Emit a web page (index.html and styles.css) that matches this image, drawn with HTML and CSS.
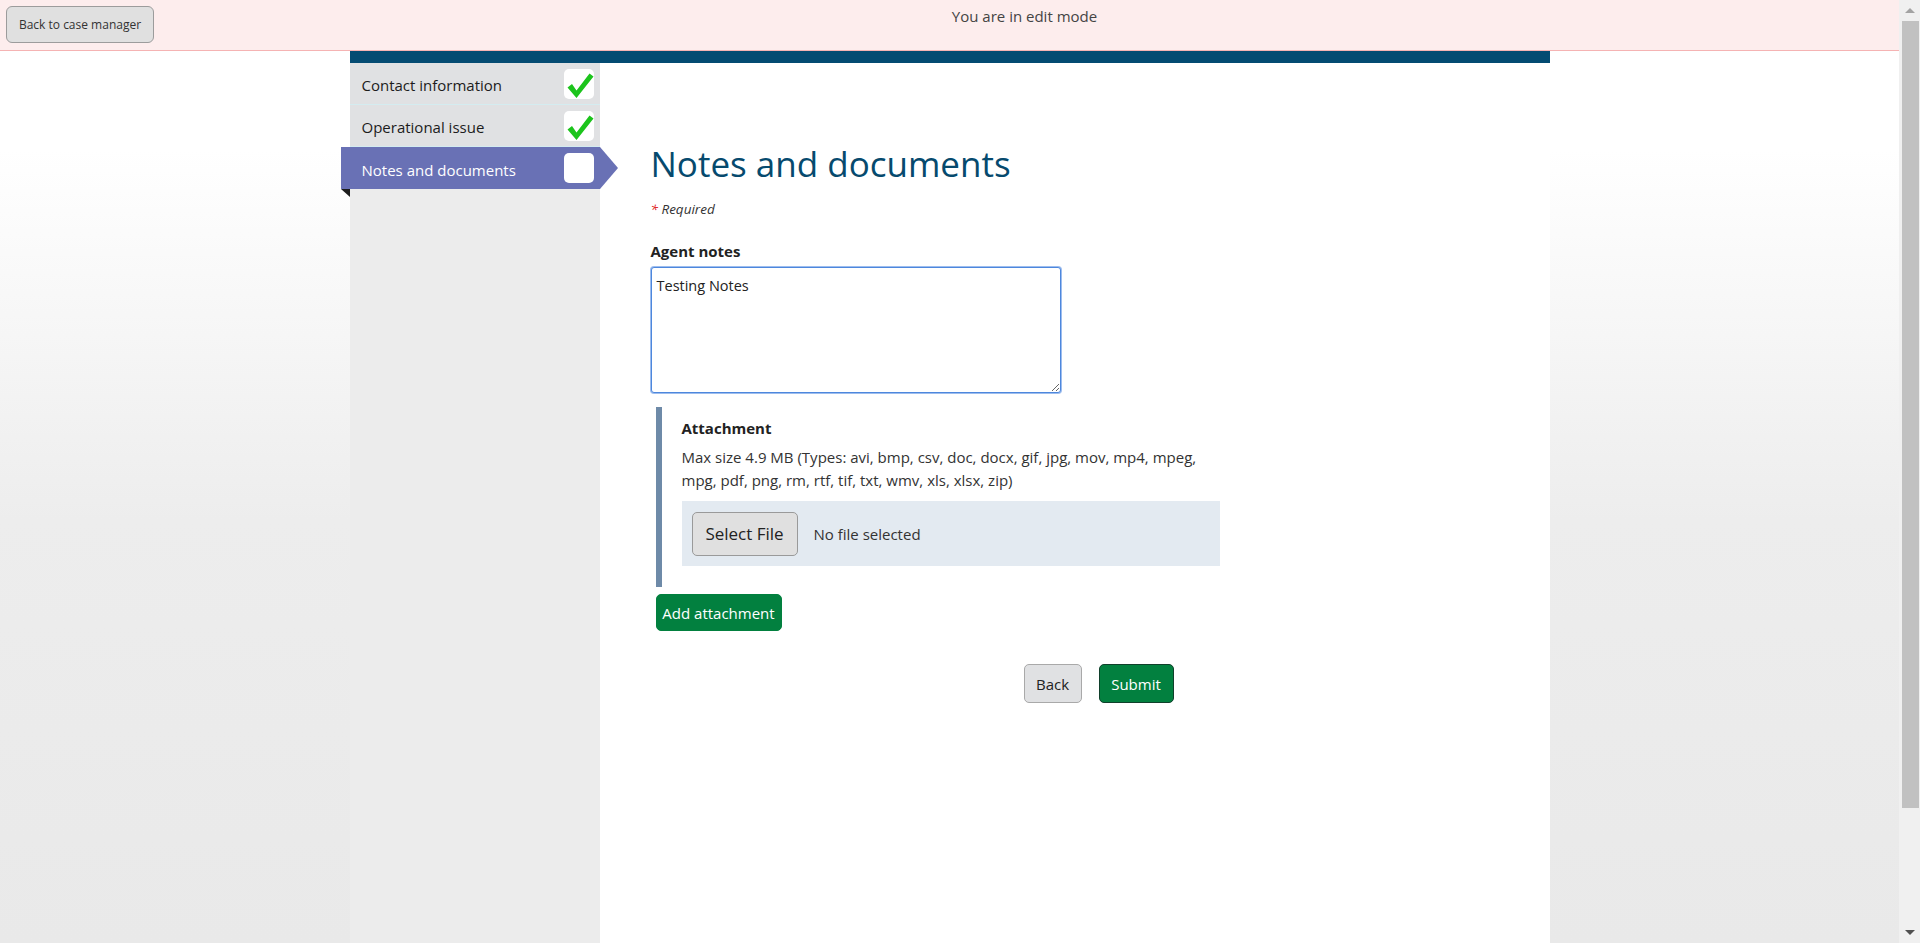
FILE: index.html
```html
<!DOCTYPE html>
<html lang="en">
<head>
<meta charset="utf-8">
<title>Notes and documents</title>
<link rel="stylesheet" href="styles.css">
</head>
<body>
<div class="viewport">
  <header class="topbar">
    <button class="back-cm" type="button">Back to case manager</button>
    <div class="mode">You are in edit mode</div>
  </header>
  <div class="page">
    <div class="band"></div>
    <div class="layout">
      <nav class="steps">
        <div class="step">
          <span class="step-label">Contact information</span>
          <span class="box"><svg viewBox="0 0 30 30" width="30" height="30"><path d="M3.5 18.5 L8 15 L12.5 21.5 L25.5 4.5 L29.5 7.5 L12.5 29 Z" fill="#1cc41c"/></svg></span>
        </div>
        <div class="step">
          <span class="step-label">Operational issue</span>
          <span class="box"><svg viewBox="0 0 30 30" width="30" height="30"><path d="M3.5 18.5 L8 15 L12.5 21.5 L25.5 4.5 L29.5 7.5 L12.5 29 Z" fill="#1cc41c"/></svg></span>
        </div>
        <div class="step active">
          <span class="step-label">Notes and documents</span>
          <span class="box"></span>
        </div>
      </nav>
      <main class="content">
        <h1 class="title">Notes and documents</h1>
        <p class="required"><span class="star">*</span> Required</p>
        <label class="field-label" for="notes">Agent notes</label>
        <textarea id="notes" class="notes">Testing Notes</textarea>
        <section class="attach">
          <h2 class="attach-title">Attachment</h2>
          <p class="attach-hint">Max size 4.9 MB (Types: avi, bmp, csv, doc, docx, gif, jpg, mov, mp4, mpeg, mpg, pdf, png, rm, rtf, tif, txt, wmv, xls, xlsx, zip)</p>
          <div class="file-row">
            <button class="select-file" type="button">Select File</button>
            <span class="file-status">No file selected</span>
          </div>
        </section>
        <button class="btn-green add" type="button">Add attachment</button>
        <div class="actions">
          <button class="btn-back" type="button">Back</button>
          <button class="btn-green submit" type="button">Submit</button>
        </div>
      </main>
    </div>
  </div>
</div>
<div class="scrollbar" aria-hidden="true">
  <span class="sb-arrow sb-up"></span>
  <span class="sb-thumb"></span>
  <span class="sb-arrow sb-down"></span>
</div>
</body>
</html>
```

FILE: styles.css
```css
* { box-sizing: border-box; }
html, body { height: 100%; }
body {
  margin: 0;
  height: 943px;
  overflow: hidden;
  display: flex;
  font-family: "Open Sans", "Noto Sans", Arial, sans-serif;
  color: #222;
}
button { font-family: inherit; cursor: pointer; }

.viewport {
  flex: 1;
  height: 943px;
  overflow: hidden;
  background: linear-gradient(#ffffff 0, #ffffff 150px, #ededed 520px, #e9e9e9 100%);
}

/* fake classic scrollbar */
.scrollbar {
  width: 21px;
  height: 943px;
  background: #f0f0f0;
  display: flex;
  flex-direction: column;
  align-items: center;
}
.sb-arrow {
  height: 21px;
  width: 21px;
  display: flex;
  align-items: center;
  justify-content: center;
  flex-shrink: 0;
}
.sb-up::before {
  content: "";
  border-left: 5px solid transparent;
  border-right: 5px solid transparent;
  border-bottom: 5px solid #a3a3a3;
}
.sb-down { margin-top: auto; }
.sb-down::before {
  content: "";
  border-left: 5px solid transparent;
  border-right: 5px solid transparent;
  border-top: 5px solid #505050;
}
.sb-thumb {
  width: 17px;
  height: 787px;
  margin-left: 2px;
  background: #c1c1c1;
}

.topbar {
  height: 51px;
  background: #fdeded;
  border-bottom: 1px solid #f5b3b3;
  display: flex;
  align-items: flex-start;
}
.back-cm {
  margin: 6px 0 0 6px;
  width: 148px;
  height: 37px;
  background: #e0e0e0;
  border: 1px solid #9c9c9c;
  border-radius: 6px;
  font-size: 12px;
  color: #333;
  padding: 0;
}
.mode {
  flex: 1;
  text-align: center;
  font-size: 15px;
  color: #444;
  padding-top: 6px;
  padding-right: 4px;
}

.page {
  width: 1200px;
  margin: 0 auto;
}
.band {
  height: 12px;
  background: #044b72;
}
.layout {
  display: flex;
  min-height: 880px;
}
.steps {
  width: 250px;
  background: #ececec;
  flex-shrink: 0;
}
.step {
  height: 42px;
  display: flex;
  align-items: center;
  justify-content: space-between;
  padding: 0 6px 0 12px;
  background: #e0e1e3;
  border-bottom: 1px solid #d4ecf0;
  font-size: 15px;
  color: #1c1c1c;
  position: relative;
}
.step-label { padding-top: 3px; }
.step .box {
  width: 30px;
  height: 30px;
  background: #fff;
  border-radius: 5px;
  display: flex;
}
.step.active {
  background: #6971b5;
  color: #fff;
  border-bottom: 0;
  margin-left: -9px;
  padding-left: 21px;
}
.step.active::after {
  content: "";
  position: absolute;
  right: -18px;
  top: 0;
  border-top: 21px solid transparent;
  border-bottom: 21px solid transparent;
  border-left: 18px solid #6971b5;
}
.step.active::before {
  content: "";
  position: absolute;
  left: 0;
  bottom: -8px;
  border-top: 8px solid #1d1d1d;
  border-left: 9px solid transparent;
}

.content {
  flex: 1;
  background: #fff;
  padding: 79px 3px 40px 51px;
}
.title {
  margin: 0;
  font-weight: 400;
  font-size: 35px;
  line-height: 44px;
  color: #064a6e;
}
.required {
  margin: 13px 0 0;
  font-size: 13.5px;
  line-height: 20px;
  font-style: italic;
  color: #333;
}
.star { color: #e0201a; }
.field-label {
  display: block;
  margin-top: 22px;
  font-size: 15px;
  line-height: 20px;
  font-weight: 700;
  color: #222;
}
.notes {
  display: block;
  margin-top: 6px;
  width: 410px;
  height: 126px;
  border: 1px solid #4d87dd;
  box-shadow: 0 0 0 1px #9dbdee;
  border-radius: 3px;
  padding: 8px 5px 6px;
  font-family: inherit;
  font-size: 14.5px;
  color: #222;
  outline: none;
  resize: vertical;
}
.attach {
  margin: 14px 0 0 5px;
  width: 570px;
  border-left: 6px solid #6e8aa8;
  padding: 11px 0 21px 20px;
}
.attach-title {
  margin: 0;
  font-size: 15px;
  line-height: 20px;
  font-weight: 700;
  color: #222;
}
.attach-hint {
  margin: 8px 0 0;
  width: 540px;
  font-size: 15px;
  line-height: 23px;
  color: #333;
}
.file-row {
  margin-top: 9px;
  width: 538px;
  height: 65px;
  background: #e3eaf1;
  display: flex;
  align-items: center;
  padding: 0 10px;
  gap: 16px;
}
.select-file {
  width: 106px;
  height: 44px;
  background: #e0e0e0;
  border: 1px solid #9a9a9a;
  border-radius: 5px;
  font-size: 17px;
  color: #222;
  padding: 0;
}
.file-status {
  font-size: 15px;
  color: #333;
}
.btn-green {
  background: #02803f;
  color: #fff;
  border: 1px solid #02803f;
  border-radius: 5px;
  font-size: 15px;
  padding: 0;
}
.add {
  display: block;
  margin: 7px 0 0 5px;
  width: 126px;
  height: 37px;
}
.actions {
  margin-top: 33px;
  display: flex;
  justify-content: center;
  gap: 17px;
}
.btn-back {
  width: 58px;
  height: 39px;
  background: #e0e1e3;
  border: 1px solid #a9a9a9;
  border-radius: 5px;
  font-size: 15px;
  color: #222;
  padding: 0;
}
.submit {
  width: 75px;
  height: 39px;
  border-color: #10402b;
}
```
